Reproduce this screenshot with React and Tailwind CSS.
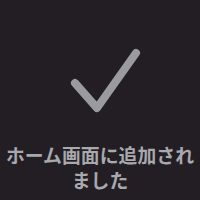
import React from "react";

export default function App() {
  return (
    <div className="w-[200px] h-[200px] bg-[#221e24] flex flex-col items-center overflow-hidden">
      <svg width="200" height="90" viewBox="0 30 200 90" className="mt-[30px] shrink-0">
        <path
          d="M75 83 L97 108 L136 53"
          fill="none"
          stroke="#9b9a9f"
          strokeWidth="8"
          strokeLinecap="round"
          strokeLinejoin="round"
        />
      </svg>
      <p
        className="mt-[22px] w-[200px] text-center text-[18.8px] leading-[25px] font-bold text-[#a9a8ac] px-[4px] tracking-[0.1px]"
        style={{ fontFamily: '"Noto Sans CJK JP", sans-serif' }}
      >
        ホーム画面に追加され
        <br />
        ました
      </p>
    </div>
  );
}
